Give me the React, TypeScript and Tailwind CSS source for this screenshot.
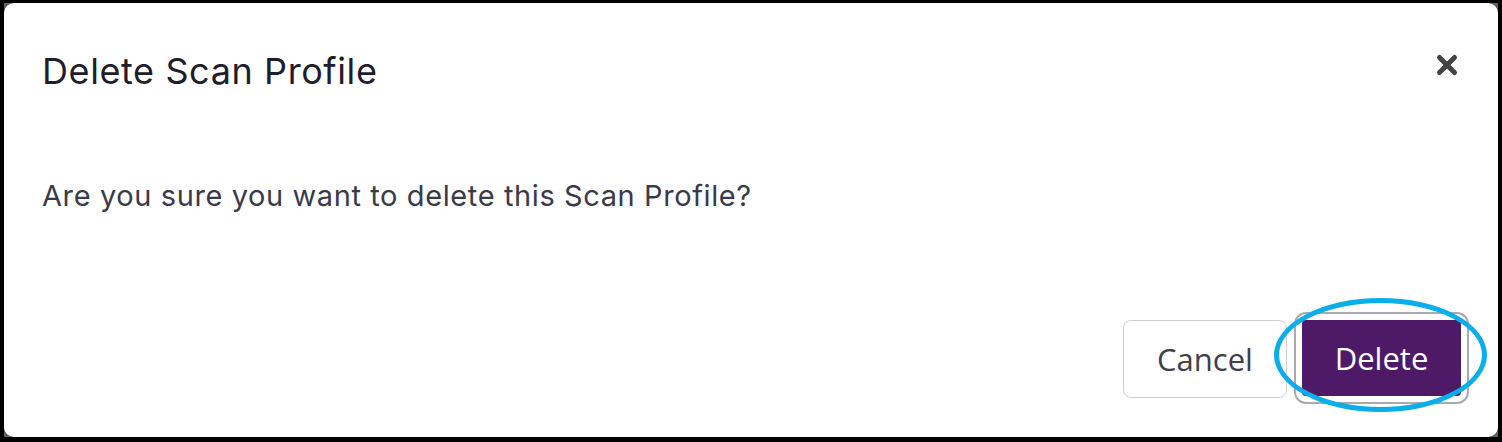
import { X } from "lucide-react";

export default function App() {
  return (
    <div className="w-[1502px] h-[442px] bg-black pt-[3px] pl-[4px] pr-[4px] pb-[5px]">
      <div className="w-full h-full bg-[#5f5f5f]">
        <div className="relative flex h-full w-full flex-col rounded-[10px] bg-white">
          {/* Header */}
          <div className="flex items-start justify-between pl-[38px] pr-[36px] pt-[44px]">
            <h2
              className="text-[36px] leading-[48px] tracking-[0.6px] text-[#1f1d2b]"
              style={{ fontFamily: "Inter, sans-serif" }}
            >
              Delete Scan Profile
            </h2>
            <button className="mt-[3px] text-[#444444]" aria-label="Close">
              <X size={30} strokeWidth={4} />
            </button>
          </div>

          {/* Body */}
          <p
            className="mt-[83px] pl-[38px] text-[29px] leading-[36px] tracking-[0.6px] text-[#3a3a48]"
            style={{ fontFamily: "Inter, sans-serif" }}
          >
            Are you sure you want to delete this Scan Profile?
          </p>

          {/* Footer */}
          <div
            className="mt-auto flex justify-end gap-[15px] pb-[39px] pr-[37px]"
            style={{ fontFamily: "'Open Sans', sans-serif" }}
          >
            <button className="h-[78px] w-[164px] rounded-[8px] border border-[#cfcfd4] bg-white text-[31px] text-[#3f3f4a]">
              Cancel
            </button>
            <div className="relative">
              <button className="h-[76px] w-[159px] rounded-[4px] bg-[#4e1a68] text-[31px] text-white outline-2 outline-offset-[6px] outline-[#a9a9b0]">
                Delete
              </button>
              {/* annotation ring */}
              <div className="pointer-events-none absolute left-[-28px] top-[-22px] h-[114px] w-[213px] rounded-[50%] border-[5px] border-[#0aaee8]" />
            </div>
          </div>
        </div>
      </div>
    </div>
  );
}
